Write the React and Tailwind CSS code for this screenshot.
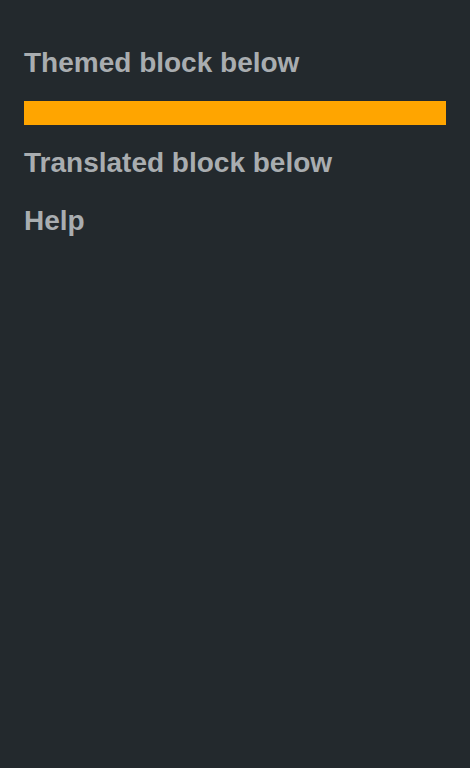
import React from 'react';

const App = () => {
  return (
    <div className="min-h-screen w-full bg-[#23292d] px-6 pt-[47px] font-['Liberation_Sans',Arial,sans-serif]">
      <h2 className="text-[28px] font-bold leading-8 text-[#a9adb0]">Themed block below</h2>
      <div className="mt-[22px] h-6 w-full bg-[#ffa500]" />
      <h2 className="mt-[22px] text-[28px] font-bold leading-8 text-[#a9adb0]">Translated block below</h2>
      <h2 className="mt-[26px] text-[28px] font-bold leading-8 text-[#a9adb0]">Help</h2>
    </div>
  );
};

export default App;
